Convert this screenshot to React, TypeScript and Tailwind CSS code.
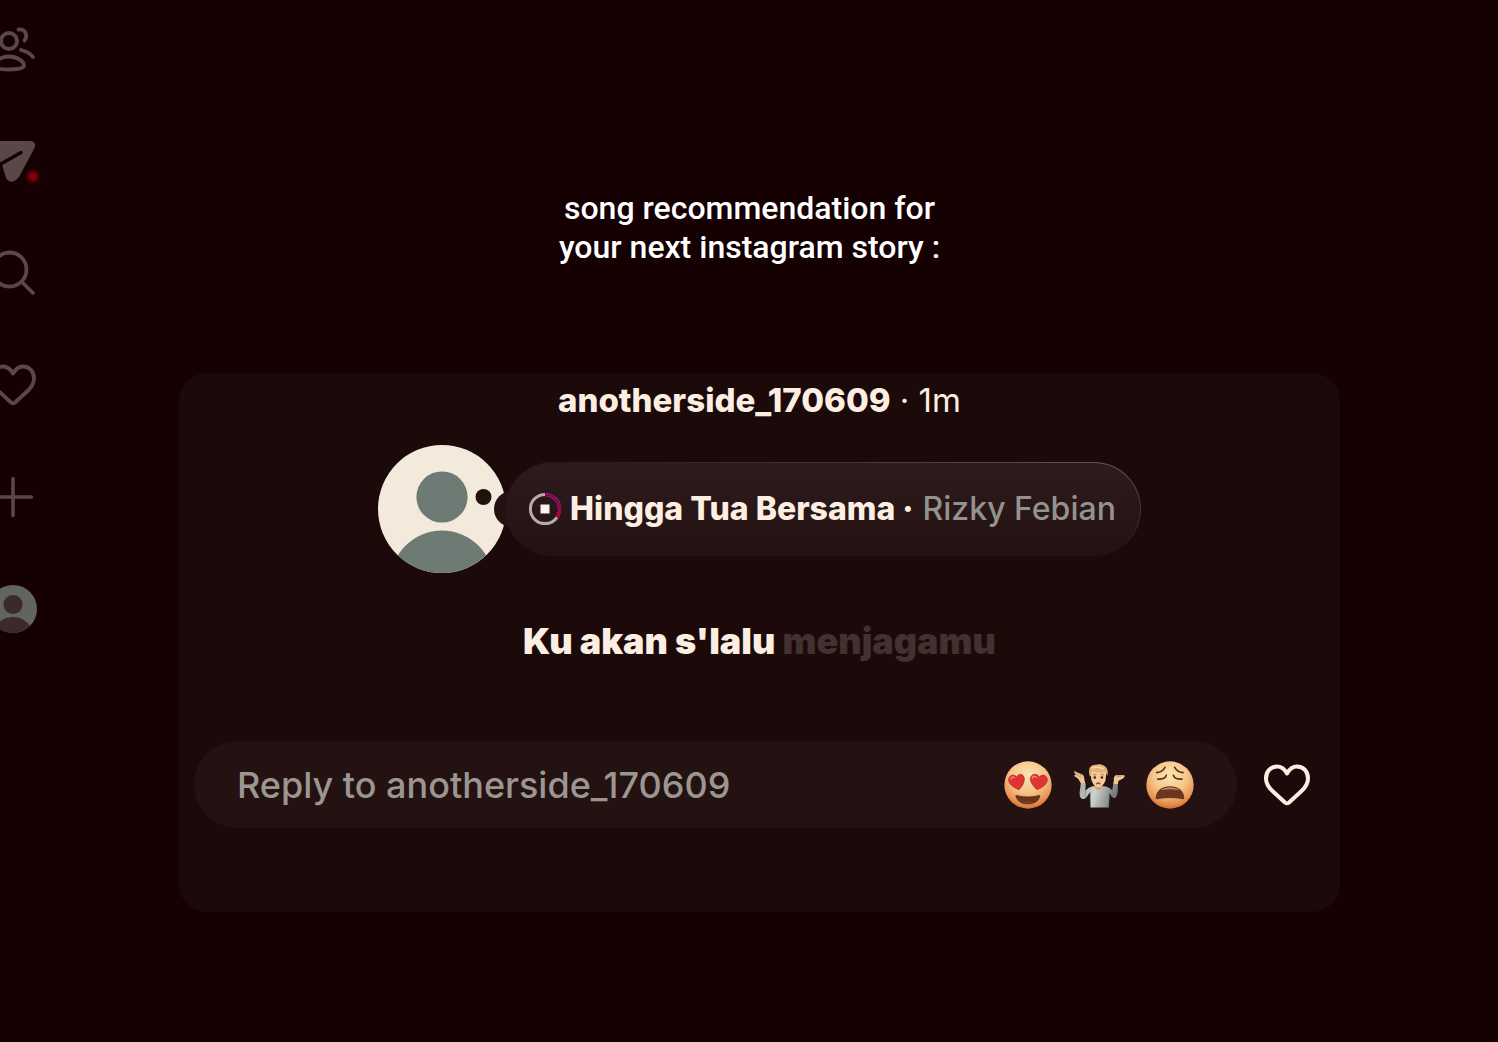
import React from "react";

const Heart: React.FC<{ className?: string; strokeWidth: number }> = ({ className, strokeWidth }) => (
    <svg viewBox="0 0 48 48" className={className} fill="none" stroke="currentColor" strokeWidth={strokeWidth} strokeLinejoin="round" aria-hidden="true">
        <path d="M24 12.500C21.500 8 18.500 5.500 14 5.500C7.500 5.500 3 10.500 3 17.500C3 23 5.500 26.500 10 30.500L22 41.500Q24 43 26 41.500L38 30.500C42.500 26.500 45 23 45 17.500C45 10.500 40.500 5.500 34 5.500C29.500 5.500 26.500 8 24 12.500Z" />
    </svg>
);

const FriendsIcon = () => (
    <svg viewBox="0 0 48 48" className="size-12" fill="none" stroke="currentColor" strokeWidth="3.8" strokeLinecap="round" aria-hidden="true">
        <circle cx="20" cy="16" r="8" />
        <path d="M20 31.500C28 31.500 35 36 35 40.500C35 43.500 28 44.500 20 44.500S5 43.500 5 40.500C5 36 12 31.500 20 31.500Z" />
        <path d="M29.500 4.500C37 3.500 39 11 35.500 15.500" />
        <path d="M32 25C36 26 41.500 28.500 44 32" />
    </svg>
);

const SendIcon = () => (
    <svg viewBox="0 0 48 48" className="size-12 overflow-visible" aria-hidden="true">
        <defs>
            <filter id="glow" x="-1" y="-1" width="3" height="3">
                <feGaussianBlur stdDeviation="2.2" />
            </filter>
        </defs>
        <path d="M4 4H41Q48.500 4.500 45 12L30 40Q22.500 49 17 41L12.500 26L2 13Q-1 5 4 4Z" fill="currentColor" />
        <path d="M10 28L32 15.500" stroke="#150002" strokeWidth="3.4" strokeLinecap="round" />
        <circle cx="44" cy="39.500" r="5.500" fill="#8a000d" filter="url(#glow)" />
    </svg>
);

const SearchIcon = () => (
    <svg viewBox="0 0 48 48" className="size-12" fill="none" stroke="currentColor" strokeWidth="3.8" strokeLinecap="round" aria-hidden="true">
        <circle cx="20.500" cy="20.500" r="17" />
        <path d="M33 33L44 44" />
    </svg>
);

const PlusIcon = () => (
    <svg viewBox="0 0 48 48" className="size-12" fill="none" stroke="currentColor" strokeWidth="3.6" strokeLinecap="round" aria-hidden="true">
        <path d="M24 5.500V42.500M5.500 24H42.500" />
    </svg>
);

const ProfileIcon = () => (
    <svg viewBox="0 0 48 48" className="size-12" aria-hidden="true">
        <clipPath id="profileClip">
            <circle cx="24" cy="24" r="24" />
        </clipPath>
        <g clipPath="url(#profileClip)">
            <rect width="48" height="48" fill="#62655e" />
            <circle cx="24" cy="19.500" r="9.600" fill="#3b2a29" />
            <circle cx="24" cy="53" r="21" fill="#3b2a29" />
        </g>
    </svg>
);

const railItems = [
    { label: "Friends", icon: <FriendsIcon /> },
    { label: "Messages", icon: <SendIcon /> },
    { label: "Search", icon: <SearchIcon /> },
    { label: "Activity", icon: <Heart className="size-12" strokeWidth={3.8} /> },
    { label: "Create", icon: <PlusIcon /> },
    { label: "Profile", icon: <ProfileIcon /> },
];

const Avatar = () => (
    <svg viewBox="0 0 128 128" className="-mr-px size-32 shrink-0 overflow-visible" role="img" aria-label="anotherside_170609">
        <clipPath id="avatarClip">
            <circle cx="64" cy="64" r="64" />
        </clipPath>
        <g clipPath="url(#avatarClip)">
            <rect width="128" height="128" fill="#f3eadb" />
            <circle cx="64" cy="52" r="25.600" fill="#6e7a74" />
            <circle cx="64" cy="137" r="51.500" fill="#6e7a74" />
        </g>
        <circle cx="105.500" cy="52" r="8" fill="#22100d" />
        <circle cx="134" cy="64" r="18" fill="#241213" />
    </svg>
);

const FaceGradient: React.FC<{ id: string }> = ({ id }) => (
    <radialGradient id={id} cx="0.5" cy="0.3" r="0.72">
        <stop offset="0" stopColor="#fbe3b4" />
        <stop offset="0.5" stopColor="#f5c688" />
        <stop offset="0.8" stopColor="#e89757" />
        <stop offset="1" stopColor="#d0692f" />
    </radialGradient>
);

const HeartEyes = () => (
    <svg viewBox="0 0 144 144" className="size-12" aria-hidden="true">
        <defs>
            <FaceGradient id="faceLove" />
        </defs>
        <circle cx="72" cy="72" r="71" fill="url(#faceLove)" />
        <path d="M45 86C31 81 13 70 14 55C16 41 32 38 38 49C43 35 60 38 61 53C61 67 53 78 45 86Z" fill="#df3431" stroke="#a92421" strokeWidth="2" />
        <path d="M99 86C113 81 131 70 130 55C128 41 112 38 106 49C101 35 80 38 79 53C79 67 91 78 99 86Z" fill="#df3431" stroke="#a92421" strokeWidth="2" />
        <path d="M21 54C22 48 27 46 31 49M85 51C87 45 93 45 97 49" stroke="#f98d80" strokeWidth="4" fill="none" strokeLinecap="round" />
        <path d="M34 104Q35 101 40 103Q72 110 103 103Q108 101 109 104C106 121 90 130 72 130S38 121 34 104Z" fill="#6b3319" />
        <path d="M54 124Q72 119 90 124Q82 128 72 128T54 124Z" fill="#7d4022" />
    </svg>
);

const Shrug = () => (
    <svg viewBox="246 54 160 144" className="h-12 w-13" aria-hidden="true">
        <defs>
            <linearGradient id="shirt" x1="0" y1="0" x2="1" y2="0.2">
                <stop offset="0" stopColor="#a3aaa9" />
                <stop offset="0.45" stopColor="#cfd1cc" />
                <stop offset="1" stopColor="#74797a" />
            </linearGradient>
        </defs>
        <path d="M270 121L266 152Q268 176 286 166L298 148L300 195H356L359 149Q366 169 376 165Q386 160 384 124L370 121L367 143Q358 132 342 130H306Q292 133 284 144L285 121Z" fill="url(#shirt)" />
        <path d="M285 144Q280 158 286 166M299 148L300 194M357 149L355 194M366 143Q369 157 365 162" stroke="#6c7172" strokeWidth="2" fill="none" />
        <path d="M271 122L284 121L281 111Q281 98 275 94L249 83Q248 88 256 95L250 95Q249 100 257 103L263 108Z" fill="#f0c79b" />
        <path d="M370 122L384 124L386 113L400 106Q408 100 403 95L377 96Q370 101 372 109Z" fill="#f0c79b" />
        <path d="M251 85L274 97M258 95L272 103M401 97L379 101" stroke="#b8794a" strokeWidth="2" fill="none" />
        <path d="M314 124H334V136Q324 145 314 136Z" fill="#d79a65" />
        <path d="M300 88Q296 63 325 64Q353 65 348 94L346 113Q336 134 325 134Q311 133 303 112Z" fill="#f4ca9c" />
        <path d="M298 99C291 77 299 63 317 64C340 57 358 74 352 98Q349 88 345 86Q324 90 306 84Q302 89 301 99Z" fill="#e2b374" />
        <path d="M303 74Q321 67 342 76" stroke="#f5d7a4" strokeWidth="5" fill="none" />
        <circle cx="313" cy="103" r="4" fill="#40200e" />
        <circle cx="335" cy="103" r="4" fill="#40200e" />
        <path d="M308 95L318 94M331 94L341 95" stroke="#9a5a2e" strokeWidth="2.500" fill="none" />
        <path d="M319 122Q324 118 329 122" stroke="#a33e2c" strokeWidth="4.500" fill="none" strokeLinecap="round" />
    </svg>
);

const Weary = () => (
    <svg viewBox="469 51 144 144" className="size-12" aria-hidden="true">
        <defs>
            <FaceGradient id="faceWeary" />
        </defs>
        <circle cx="541" cy="123" r="71" fill="url(#faceWeary)" />
        <g stroke="#4f3215" strokeWidth="5" fill="none" strokeLinecap="round">
            <path d="M501 86Q518 84 526 70M580 86Q563 84 555 70" />
            <path d="M504 105Q525 108 530 94M577 105Q556 108 551 94" />
        </g>
        <path d="M498 163C499 139 517 127 541 127S583 139 584 163Q583 167 576 165Q541 159 506 165Q499 167 498 163Z" fill="#6d3621" />
        <path d="M512 138Q524 130 541 130Q558 130 570 138Q541 133 512 138Z" fill="#b98a70" />
    </svg>
);

const reactions = [
    { label: "Heart eyes", icon: <HeartEyes /> },
    { label: "Shrug", icon: <Shrug /> },
    { label: "Weary", icon: <Weary /> },
];

const PlayingRing = () => (
    <svg viewBox="0 0 34 34" className="size-[34px] shrink-0" fill="none" strokeWidth="3" aria-hidden="true">
        <circle cx="17" cy="17" r="14.600" stroke="#b7aba8" />
        <path d="M17 2.400A14.600 14.600 0 0 1 29 25.400" stroke="#8c0057" />
        <path d="M31.600 18A14.600 14.600 0 0 1 29 25.400" stroke="#b00035" />
        <rect x="12.500" y="12.500" width="9" height="9" fill="#fdf3ea" />
    </svg>
);

const App: React.FC = () => {
    return (
        <div className="flex min-h-screen overflow-hidden bg-[#150002] font-['Inter','Liberation_Sans',sans-serif] text-[#fdeee2]">
            <nav className="-ml-[11px] flex w-12 shrink-0 flex-col gap-16 pt-[25px] text-[#5a4848]">
                {railItems.map((item) => (
                    <button key={item.label} type="button" aria-label={item.label} className="size-12">
                        {item.icon}
                    </button>
                ))}
            </nav>
            <main className="flex min-w-0 flex-1 flex-col pr-9 pt-[189px]">
                <h1 className="text-center font-['Roboto','Inter',sans-serif] text-[32px] leading-[39px] font-medium text-white">
                    song recommendation for
                    <br />
                    your next instagram story :
                </h1>
                <section className="mt-[106px] mr-[122px] ml-[142px] flex flex-col rounded-[28px] bg-[#1c0a0b] pt-[7px] pr-[29px] pb-21 pl-[15px]">
                    <p className="pl-3.5 text-center text-[33px] leading-10">
                        <span className="font-extrabold">anotherside_170609</span> · 1m
                    </p>
                    <div className="mt-[25px] flex items-center justify-center pl-3.5">
                        <Avatar />
                        <div className="rounded-[47px] bg-linear-to-tr from-[#241213] from-50% to-[#6b5657] p-px">
                            <div className="flex h-[92px] items-center gap-2 rounded-[46px] bg-linear-to-t from-[#241112] to-[#2e1b1d] pr-6 pl-[22px] text-[32px] whitespace-nowrap">
                                <PlayingRing />
                                <p>
                                    <span className="font-extrabold">Hingga Tua Bersama ·</span>{" "}
                                    <span className="font-medium text-[#92938d]">Rizky Febian</span>
                                </p>
                            </div>
                        </div>
                    </div>
                    <p className="mt-11 pl-3.5 text-center text-[36px] leading-12 font-black">
                        Ku akan s'lalu <span className="text-[#423131]">menjagamu</span>
                    </p>
                    <div className="mt-[76px] flex items-center gap-[26px]">
                        <div className="flex h-[87px] min-w-0 flex-1 items-center rounded-full bg-[#241213] pr-[43px] pl-[43px]">
                            <input
                                type="text"
                                aria-label="Reply to anotherside_170609"
                                placeholder="Reply to anotherside_170609"
                                className="min-w-0 flex-1 bg-transparent text-[36px] font-medium outline-none placeholder:text-[#9c9690]"
                            />
                            <div className="flex items-center gap-[21px]">
                                {reactions.map((item) => (
                                    <button key={item.label} type="button" aria-label={item.label}>
                                        {item.icon}
                                    </button>
                                ))}
                            </div>
                        </div>
                        <button type="button" aria-label="Like" className="size-12 shrink-0">
                            <Heart className="size-12 text-[#fdeee2]" strokeWidth={4} />
                        </button>
                    </div>
                </section>
            </main>
        </div>
    );
};

export default App;
